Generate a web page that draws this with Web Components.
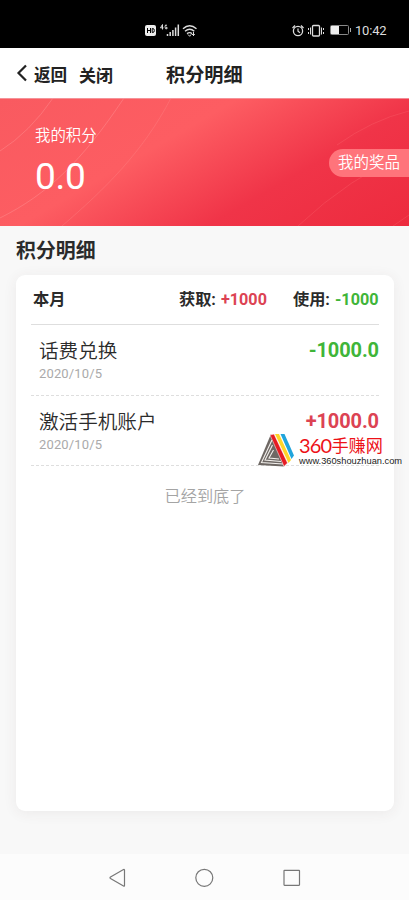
<!DOCTYPE html>
<html lang="zh-CN"><head><meta charset="utf-8"><title>积分明细</title>
<style>
html,body{margin:0;width:409px;height:900px;overflow:hidden;background:#f8f8f8}
body{font-family:Roboto,"Noto Sans CJK SC",sans-serif;color:#2b2b2b}
</style></head><body>
<points-app></points-app>
<script>
function define(name, html){
  const t=document.createElement('template');t.innerHTML=html;
  customElements.define(name,class extends HTMLElement{
    constructor(){super();this.attachShadow({mode:'open'}).appendChild(t.content.cloneNode(true));}
  });
}
define('status-bar',`<style>:host{display:block;height:48px;background:#000;color:#ddd}
.row{display:flex;height:48px;align-items:center}svg{display:block;flex:none}
.time{font-size:13px;line-height:20px;padding-top:13px;margin-left:3px;letter-spacing:-.2px;white-space:nowrap}</style>
<div class="row"><svg width="352" height="48" fill="none" stroke="#ddd">
<rect x="145" y="25" width="11" height="11" rx="2" fill="#eee" stroke="none"/>
<path d="M147.5 28v5M150.5 28v5M147.5 30.5h3M152.2 28.5v4h.7q1.400 0 1.400-2t-1.400-2z" stroke="#000" stroke-width="1"/>
<path d="M162.500 29.500v-5l-2 3.300h3M167 25.300q-2-1.300-2 1.500t2 2v-1.500h-1" stroke-width="1"/>
<path d="M167.500 36v-2M170.200 36v-4M172.900 36v-6M175.600 36v-8.500M178.300 36V24.500" stroke-width="1.500"/>
<path d="M183 28.800q6.500-6 13.500 0M185 31.300q4.700-4 9.300 0M187 33.600q2.700-2 5 0" stroke-width="1.400"/><path d="M188 34.500l1.700 1.800 1.200-1.800M193.500 32v4M191.800 34.500h3" stroke-width="1"/>
<circle cx="298" cy="31" r="4.600" stroke-width="1.300"/><path d="M298 28.500v2.700l2 1.500M292.500 28l2.500-2.500M303.500 28l-2.500-2.500" stroke-width="1.200"/>
<rect x="312.500" y="25.500" width="7" height="10.500" rx="1" stroke-width="1.300"/><path d="M310.500 27.500v7M308.500 28v2m0 2v2M321.500 27.500v7M323.500 28v2m0 2v2" stroke-width="1"/>
<rect x="330.500" y="25.500" width="18" height="9" rx="1" stroke="#888"/><rect x="331" y="26" width="8" height="8" fill="#eee" stroke="none"/><path d="M350.500 28v4" stroke="#aaa"/>
</svg><span class="time">10:42</span></div>`);
define('nav-header',`<style>:host{display:flex;height:50px;background:#fff;align-items:center;color:#222;font-weight:700;line-height:24px;padding-top:5px;box-sizing:border-box;white-space:nowrap}
svg{margin:-5px 0 0 15px;flex:none}.back{font-size:16.600px;margin-left:7px;width:45px}.close{font-size:17px;width:87px}.title{font-size:19.200px}</style>
<svg width="12" height="18"><path d="M11 1.500L3.500 9l7.500 7.500" fill="none" stroke="#222" stroke-width="2.200"/></svg>
<span class="back">返回</span><span class="close">关闭</span><span class="title">积分明细</span>`);
define('score-banner',`<style>:host{display:grid;height:128px;color:#fff;background:linear-gradient(150deg,#f95a60 0%,#fd5d62 38%,#f03448 68%,#ed2b3e 100%)}
:host>*{grid-area:1/1}svg{display:block}.content{display:flex;justify-content:space-between;z-index:1;padding-left:35px}
.label{font-size:15.400px;font-weight:350;line-height:22px;margin-top:27px}.score{font-size:37px;line-height:44px;margin-top:8px;letter-spacing:-.3px;font-weight:400}
.prize{box-sizing:border-box;height:28px;width:80px;margin-top:51px;padding-left:9px;border-radius:14px 0 0 14px;background:#ff747b;font-size:15.500px;font-weight:350;line-height:29px;white-space:nowrap}</style>
<svg width="409" height="128" fill="none"><path d="M0 53Q30 34 53 0M0 120C48 96 82 63 124 0" stroke="#ff9295" stroke-opacity=".45"/><path d="M62 128C105 91 143 54 171 0" stroke="#ff9295" stroke-opacity=".28"/><path d="M298 128Q350 79 409 54M337 47Q372 22 409 13M393 128l16-11" stroke="#ff777d" stroke-opacity=".25"/><path d="M0 .5h409" stroke="#f3a0a6" stroke-opacity=".8"/></svg>
<div class="content"><div><div class="label">我的积分</div><div class="score">0.0</div></div><div class="prize">我的奖品</div></div>`);
define('point-row',`<style>:host{display:flex;box-sizing:border-box;height:70.500px;justify-content:space-between;border-bottom:1px dashed #dedede;padding:11px 0 0 8px;white-space:nowrap}
.name{font-size:19.600px;font-weight:350;line-height:32px}.date{font-size:13px;line-height:18px;color:#aaa;letter-spacing:.15px;margin-top:-3px}.amount{font-size:20px;line-height:28px;font-weight:700;letter-spacing:-.1px;color:var(--amount)}</style>
<div><div class="name"><slot name="name"></slot></div><div class="date"><slot name="date"></slot></div></div><div class="amount"><slot></slot></div>`);
define('points-card',`<style>:host{display:block;box-sizing:border-box;margin:9px 15px 0 16px;height:536px;padding:0 15px;border-radius:9px;background:#fff;box-shadow:0 2px 14px rgba(80,50,50,.075)}
header{display:flex;box-sizing:border-box;height:50px;border-bottom:1px solid #dedede;font-weight:700;font-size:16.200px;line-height:50px;padding-left:2px;white-space:nowrap}
.month{width:146px}.get{width:114px}.red,.green{margin-left:1px}.red{color:#dc4353}.green{color:#3fb539}.end{font-size:16.200px;font-weight:350;line-height:24px;color:#a4a4a4;text-align:center;margin:19px 0 0 0}</style>
<header><span class="month">本月</span><span class="get">获取: <span class="red">+1000</span></span><span>使用: <span class="green">-1000</span></span></header><slot></slot><div class="end">已经到底了</div>`);
define('site-mark',`<style>:host{position:absolute;left:257px;top:434px;display:flex;width:150px;height:34px;white-space:nowrap}
svg{flex:none}.name{display:flex;font-family:"Noto Sans CJK SC",sans-serif;color:#ed1218;font-size:17.200px;line-height:20px;height:20px;margin:1px 0 0 5px;align-items:center}.num{font-family:Lato,sans-serif;font-size:20px;letter-spacing:-.8px}.url{font:9.270px/11px "Liberation Sans",sans-serif;color:#222;margin:1px 0 0 5px}</style>
<svg width="37" height="34" fill="none"><path d="M14 0L1 31l26 1.500z" fill="#6e6864"/><path d="M15 6L4.500 28.500 26 30M15.500 11L8 26l16 1.500M16.500 16l-4.500 8 10 1" stroke="#f4f1ee" stroke-width="1.100"/><path d="M13 1l4-1 13.500 29-3.500 3.500z" fill="#e51c23" stroke="#fff" stroke-width=".5"/><path d="M18 0h4l12 26-2.500 3z" fill="#ffd528"/><path d="M23.500 0h4L37 21.500 34.500 25z" fill="#20a5dc"/></svg>
<div><div class="name"><span class="num">360</span>手赚网</div><div class="url">www.360shouzhuan.com</div></div>`);
define('system-nav',`<style>:host{display:block;height:46px;background:#fcfcfc}svg{display:block}</style>
<svg width="409" height="46" fill="none" stroke="#777" stroke-width="1.200"><path d="M124.500 16v15.500q0 1-1 .5L110.500 24.500q-1-.7 0-1.400l13-7.500q1-.4 1 .4z"/><circle cx="204.300" cy="23.800" r="8.500"/><rect x="284" y="16.300" width="15.500" height="15" rx=".5"/></svg>`);
define('points-app',`<style>:host{display:flex;flex-direction:column;position:relative;width:409px;height:900px;background:#f8f8f8}
h2{font-size:19.900px;line-height:28px;font-weight:700;margin:12px 0 0 16px}system-nav{margin-top:auto}</style>
<status-bar></status-bar><nav-header></nav-header><score-banner></score-banner><h2>积分明细</h2>
<points-card><point-row style="--amount:#3fb539"><span slot="name">话费兑换</span><span slot="date">2020/10/5</span>-1000.0</point-row><point-row style="--amount:#dc4353"><span slot="name">激活手机账户</span><span slot="date">2020/10/5</span>+1000.0</point-row></points-card>
<site-mark></site-mark><system-nav></system-nav>`);
</script></body></html>
